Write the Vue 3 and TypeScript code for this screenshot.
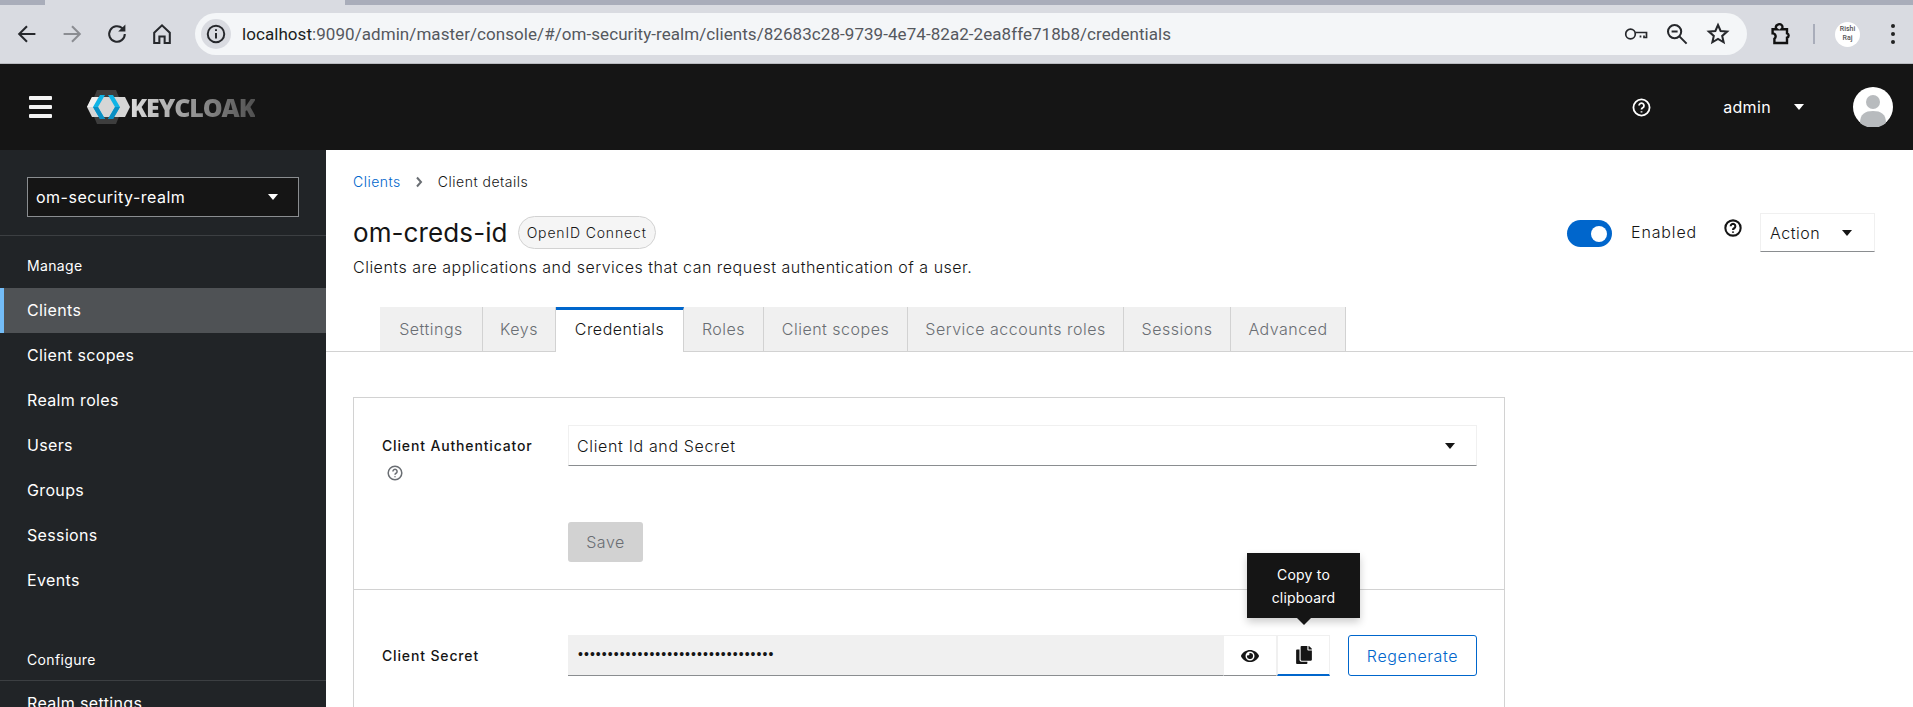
<script setup lang="ts">
const url = {
  host: 'localhost',
  rest: ':9090/admin/master/console/#/om-security-realm/clients/82683c28-9739-4e74-82a2-2ea8ffe718b8/credentials',
}

const manageItems = ['Clients', 'Client scopes', 'Realm roles', 'Users', 'Groups', 'Sessions', 'Events']
const tabs = ['Settings', 'Keys', 'Credentials', 'Roles', 'Client scopes', 'Service accounts roles', 'Sessions', 'Advanced']
const secret = '•'.repeat(33)
</script>

<template>
  <div class="page">
    <div class="tabstrip"><div class="active-tab"></div></div>

    <div class="toolbar">
      <div class="nav-icons">
        <svg class="tb-icon" viewBox="0 0 20 20"><path d="M17 10H4M10 3.500 3.500 10l6.500 6.500" /></svg>
        <svg class="tb-icon muted" viewBox="0 0 20 20"><path d="M3 10h13M10 3.500l6.500 6.500-6.500 6.500" /></svg>
        <svg class="tb-icon" viewBox="0 0 20 20"><path d="M16.500 10a6.500 6.500 0 1 1-2-4.700" /><path class="solid" d="M17 2v6h-6z" /></svg>
        <svg class="tb-icon" viewBox="0 0 20 20"><path d="M3.500 9 10 2.800 16.500 9v8.500h-4.300v-5.500H7.800v5.500H3.500z" /></svg>
      </div>

      <div class="urlbar">
        <span class="site-info">
          <svg viewBox="0 0 20 20" class="info-icon"><circle cx="10" cy="10" r="7.500" /><path d="M10 9v5M10 5.600v1.600" /></svg>
        </span>
        <span class="url"><span class="host">{{ url.host }}</span>{{ url.rest }}</span>
        <span class="url-actions">
          <svg class="tb-icon key" viewBox="0 0 24 14"><circle cx="6.500" cy="7" r="4.800" /><path d="M11.500 5.500h11v5h-2.500v-2M16.500 8.500v2" /></svg>
          <svg class="tb-icon" viewBox="0 0 20 20"><circle cx="8" cy="8" r="5.500" /><path d="M5.500 8h5M12 12l6 6" /></svg>
          <svg class="tb-icon" viewBox="0 0 20 20"><path d="m10 2.500 2.200 5 5.400.5-4.100 3.600 1.200 5.300L10 14.100l-4.700 2.800 1.200-5.300L2.400 8l5.400-.5z" /></svg>
        </span>
      </div>

      <div class="toolbar-end">
        <svg class="tb-icon puzzle" viewBox="0 0 20 20"><path d="M3 6h3.500a2 2 0 0 1 .5-3.500A2 2 0 0 1 10.500 6H15v3.500a1.800 1.800 0 0 1 0 3.500v4.500H4.500V14a2.500 2.500 0 0 0-1.500-4.500z" /></svg>
        <span class="tb-sep"></span>
        <span class="profile">Rishi<br />Raj</span>
        <span class="kebab"><i></i><i></i><i></i></span>
      </div>
    </div>

    <header class="masthead">
      <div class="hamburger"><i></i><i></i><i></i></div>
      <div class="logo">
        <svg class="logo-mark" viewBox="0 0 44 34">
          <path d="M10 0h19l7 17-7 17H10L3 17z" fill="#3d3d3d" />
          <path d="M0 17 5 7h33l5 10-5 10H5z" fill="#d6d6d6" />
          <path d="M0 17 5 7h6l-4 10z" fill="#efefef" />
          <path d="M13 5 6 17l7 12h5l-7-12 7-12z" fill="#0fb4e6" />
          <path d="M26 5h-5l7 12-7 12h5l7-12z" fill="#0fb4e6" />
          <path d="M6 17h5l7 12h-5zM28 17h5l-7 12h-5z" fill="#0a8fc4" />
        </svg>
        <span class="logo-text">KEYCLOAK</span>
      </div>
      <div class="masthead-right">
        <svg class="help white" viewBox="0 0 20 20"><circle cx="10" cy="10" r="8.500" /><path d="M7.400 8a2.600 2.600 0 1 1 3.900 2.300c-.9.500-1.300 1-1.300 1.900M10 14v1.200" /></svg>
        <span class="user">admin</span>
        <span class="caret white"></span>
        <svg class="avatar" viewBox="0 0 40 40">
          <circle cx="20" cy="20" r="20" fill="#fff" />
          <circle cx="20" cy="15" r="7" fill="#b8bbbe" />
          <path d="M7 36c0-9 5-12 13-12s13 3 13 12a20 20 0 0 1-26 0z" fill="#b8bbbe" />
        </svg>
      </div>
    </header>

    <div class="body">
      <aside class="sidebar">
        <div class="realm-wrap">
          <div class="realm"><span>om-security-realm</span><span class="caret white"></span></div>
        </div>
        <div class="nav-title">Manage</div>
        <nav>
          <a v-for="item in manageItems" :key="item" class="nav-item" :class="{ current: item === 'Clients' }">{{ item }}</a>
        </nav>
        <div class="nav-title configure">Configure</div>
        <a class="nav-item">Realm settings</a>
      </aside>

      <main class="main">
        <section class="page-head">
          <div class="crumbs">
            <a class="link">Clients</a>
            <svg class="chevron" viewBox="0 0 8 12"><path d="m2 1.500 4 4.500-4 4.500" /></svg>
            <span>Client details</span>
          </div>
          <div class="head-row">
            <div class="head-left">
              <div class="title-row">
                <h1>om-creds-id</h1>
                <span class="badge">OpenID Connect</span>
              </div>
              <p class="desc">Clients are applications and services that can request authentication of a user.</p>
            </div>
            <div class="head-right">
              <span class="switch"><i></i></span>
              <span class="enabled">Enabled</span>
              <svg class="help black" viewBox="0 0 20 20"><circle cx="10" cy="10" r="8.500" /><path d="M7.400 8a2.600 2.600 0 1 1 3.900 2.300c-.9.500-1.300 1-1.300 1.900M10 14v1.200" /></svg>
              <div class="action"><span>Action</span><span class="caret"></span></div>
            </div>
          </div>
        </section>

        <div class="tabs">
          <div v-for="tab in tabs" :key="tab" class="tab" :class="{ active: tab === 'Credentials' }">{{ tab }}</div>
        </div>

        <div class="card">
          <section class="form-row first">
            <div class="label-col">
              <label>Client Authenticator</label>
              <svg class="help gray" viewBox="0 0 20 20"><circle cx="10" cy="10" r="8.500" /><path d="M7.400 8a2.600 2.600 0 1 1 3.900 2.300c-.9.500-1.300 1-1.300 1.900M10 14v1.200" /></svg>
            </div>
            <div class="field-col">
              <div class="select"><span>Client Id and Secret</span><span class="caret"></span></div>
              <button class="save">Save</button>
            </div>
          </section>
          <section class="form-row second">
            <div class="label-col centered"><label>Client Secret</label></div>
            <div class="secret-row">
              <div class="secret">{{ secret }}</div>
              <button class="icon-btn">
                <svg viewBox="0 0 576 512"><path d="M572.520 241.400C518.290 135.590 410.930 64 288 64S57.680 135.640 3.480 241.410a32.350 32.350 0 0 0 0 29.190C57.710 376.410 165.070 448 288 448s230.320-71.640 284.520-177.410a32.350 32.350 0 0 0 0-29.190zM288 400a144 144 0 1 1 144-144 143.930 143.930 0 0 1-144 144zm0-240a95.310 95.310 0 0 0-25.310 3.790 47.850 47.850 0 0 1-66.900 66.900A95.780 95.780 0 1 0 288 160z" /></svg>
              </button>
              <button class="icon-btn copy">
                <svg viewBox="0 0 448 512"><path d="M320 448v40c0 13.255-10.745 24-24 24H24c-13.255 0-24-10.745-24-24V120c0-13.255 10.745-24 24-24h72v296c0 30.879 25.121 56 56 56h168zm0-344V0H152c-13.255 0-24 10.745-24 24v368c0 13.255 10.745 24 24 24h272c13.255 0 24-10.745 24-24V128H344c-13.200 0-24-10.800-24-24zm120.971-31.029L375.029 7.029A24 24 0 0 0 358.059 0H352v96h96v-6.059a24 24 0 0 0-7.029-16.970z" /></svg>
                <span class="tooltip">Copy to clipboard</span>
              </button>
              <button class="regen">Regenerate</button>
            </div>
          </section>
        </div>
      </main>
    </div>
  </div>
</template>

<style>
html,
body {
  margin: 0;
  overflow: hidden;
  background: #fff;
}
</style>

<style scoped>
.page {
  width: 1913px;
  height: 707px;
  overflow: hidden;
  font-family: Inter, "Liberation Sans", sans-serif;
  font-size: 16px;
  letter-spacing: 0.350px;
  color: #151515;
  display: flex;
  flex-direction: column;
}

.tabstrip {
  height: 5px;
  background: #a9adba;
  flex: none;
}
.active-tab {
  width: 300px;
  margin-left: 45px;
  height: 5px;
  background: #d9dbe1;
}

.toolbar {
  height: 59px;
  flex: none;
  box-sizing: border-box;
  padding: 8px 0 8px 15px;
  background: #d9dbe1;
  border-bottom: 1px solid #b9bbc0;
  display: flex;
  align-items: flex-start;
}
.nav-icons {
  display: flex;
  gap: 21px;
  margin-top: 9px;
}
.tb-icon {
  width: 24px;
  height: 24px;
  fill: none;
  stroke: #26282c;
  stroke-width: 1.700;
}
.tb-icon.muted {
  stroke: #8b8d92;
}
.tb-icon .solid {
  fill: #26282c;
  stroke: none;
}
.urlbar {
  margin-left: 21px;
  width: 1552px;
  height: 42px;
  border-radius: 21px;
  background: #f4f6f8;
  display: flex;
  align-items: center;
  padding-left: 6px;
  box-sizing: border-box;
}
.site-info {
  width: 30px;
  height: 30px;
  border-radius: 50%;
  background: #d9dbe1;
  display: flex;
  align-items: center;
  justify-content: center;
}
.info-icon {
  width: 22px;
  height: 22px;
  fill: none;
  stroke: #26282c;
  stroke-width: 1.800;
}
.url {
  margin-left: 11px;
  font-family: Roboto, sans-serif;
  font-size: 17px;
  letter-spacing: 0.060px;
  color: #55585e;
  white-space: nowrap;
}
.host {
  color: #1c1e21;
}
.url-actions {
  margin-left: auto;
  margin-right: 17px;
  display: flex;
  align-items: center;
  gap: 17px;
}
.key {
  height: 14px;
}
.toolbar-end {
  display: flex;
  align-items: center;
  height: 42px;
  margin-left: 22px;
}
.puzzle {
  stroke-width: 2;
  stroke: #111;
}
.tb-sep {
  width: 2px;
  height: 20px;
  margin-left: 20px;
  background: #a9adba;
}
.profile {
  margin-left: 20px;
  width: 25px;
  height: 25px;
  border-radius: 50%;
  background: #fff;
  font-family: Roboto, sans-serif;
  font-size: 7px;
  font-weight: 500;
  letter-spacing: 0;
  line-height: 9px;
  text-align: center;
  display: flex;
  align-items: center;
  color: #555;
  justify-content: center;
}
.kebab {
  margin-left: 31px;
  display: flex;
  flex-direction: column;
  gap: 4px;
}
.kebab i {
  width: 4px;
  height: 4px;
  border-radius: 50%;
  background: #222;
}

.masthead {
  height: 86px;
  background: #151515;
  display: flex;
  align-items: center;
  color: #fff;
  flex: none;
}
.hamburger {
  margin-left: 29px;
  display: flex;
  flex-direction: column;
  gap: 5px;
}
.hamburger i {
  width: 23px;
  height: 4px;
  border-radius: 1px;
  background: #f4f4f4;
}
.logo {
  margin-left: 35px;
  display: flex;
  align-items: center;
}
.logo-mark {
  width: 44px;
  height: 34px;
}
.logo-text {
  font-family: "Open Sans", sans-serif;
  font-weight: 800;
  font-size: 25px;
  letter-spacing: -1.100px;
  line-height: 1;
  margin-left: -1px;
  background: linear-gradient(90deg, #dcdcdc, #505050 100%);
  -webkit-background-clip: text;
  background-clip: text;
  color: transparent;
}
.masthead-right {
  margin-left: auto;
  margin-right: 20px;
  display: flex;
  align-items: center;
}
.help {
  fill: none;
  stroke-width: 1.900;
}
.help.white {
  width: 19px;
  height: 19px;
  stroke: #fff;
}
.user {
  margin-left: 72px;
  font-size: 16px;
  color: #fff;
}
.caret {
  display: inline-block;
  width: 0;
  height: 0;
  border-left: 5px solid transparent;
  border-right: 5px solid transparent;
  border-top: 6px solid #151515;
}
.caret.white {
  border-top-color: #fff;
}
.masthead-right .caret {
  margin-left: 23px;
}
.avatar {
  margin-left: 49px;
  width: 40px;
  height: 40px;
}

.body {
  flex: 1;
  display: flex;
  min-height: 0;
}
.sidebar {
  width: 326px;
  flex: none;
  background: #212427;
  color: #fff;
}
.realm-wrap {
  padding: 27px 27px 18px;
  border-bottom: 1px solid #3c3f42;
}
.realm {
  height: 40px;
  box-sizing: border-box;
  background: #151515;
  border: 1px solid #8a8d90;
  display: flex;
  align-items: center;
  justify-content: space-between;
  padding: 0 20px 0 8px;
  letter-spacing: 0.500px;
}
.nav-title {
  font-size: 14px;
  padding-left: 27px;
  height: 52px;
  line-height: 59px;
  box-sizing: border-box;
}
.nav-item {
  display: block;
  height: 45px;
  line-height: 45px;
  padding-left: 27px;
}
.nav-item.current {
  background: #4f5255;
  border-left: 4px solid #73bcf7;
  padding-left: 23px;
}
.nav-title.configure {
  margin-top: 33px;
  height: 45px;
  line-height: 48px;
  border-bottom: 1px solid #3c3f42;
}

.main {
  flex: 1;
  min-width: 0;
  font-weight: 350;
  letter-spacing: 0.500px;
}
.page-head {
  height: 157px;
  box-sizing: border-box;
  padding: 21px 38px 0 27px;
}
.crumbs {
  height: 21px;
  display: flex;
  align-items: center;
  font-size: 14px;
}
.link {
  color: #06c;
}
.chevron {
  width: 8px;
  height: 12px;
  margin: 0 15px 0 14px;
  fill: none;
  stroke: #6a6e73;
  stroke-width: 2;
}
.head-row {
  display: flex;
  justify-content: space-between;
  margin-top: 21px;
}
.title-row {
  margin-top: 3px;
  height: 33px;
  display: flex;
  align-items: center;
}
h1 {
  margin: 0;
  font-size: 26px;
  font-weight: 400;
  letter-spacing: 0.100px;
  line-height: 33px;
}
.badge {
  margin-left: 10px;
  height: 33px;
  box-sizing: border-box;
  border: 1px solid #d2d2d2;
  border-radius: 17px;
  background: #f5f5f5;
  padding: 0 8px;
  font-size: 14px;
  letter-spacing: 0.850px;
  line-height: 31px;
  white-space: nowrap;
}
.desc {
  margin: 8px 0 0;
  line-height: 20px;
}
.head-right {
  display: flex;
  align-items: flex-start;
}
.switch {
  margin-top: 7px;
  width: 45px;
  height: 27px;
  border-radius: 14px;
  background: #06c;
  position: relative;
}
.switch i {
  position: absolute;
  right: 5px;
  top: 6px;
  width: 16px;
  height: 16px;
  border-radius: 50%;
  background: #fff;
}
.enabled {
  margin-left: 19px;
  margin-top: 9px;
  letter-spacing: 0.850px;
}
.help.black {
  margin: 6px 18px 0 27px;
  width: 18px;
  height: 18px;
  stroke: #151515;
  stroke-width: 2.300;
}
.action {
  width: 115px;
  height: 39px;
  box-sizing: border-box;
  border: 1px solid #f0f0f0;
  border-bottom-color: #8a8d90;
  display: flex;
  align-items: center;
  justify-content: space-between;
  padding: 0 22px 0 9px;
}

.tabs {
  height: 45px;
  box-sizing: border-box;
  padding-left: 54px;
  border-bottom: 1px solid #d2d2d2;
  display: grid;
  grid-template-columns: 103px 73px 128px 80px 144px 216px 107px 115px;
  justify-content: start;
}
.tab {
  height: 44px;
  box-sizing: border-box;
  line-height: 44px;
  text-align: center;
  background: #f0f0f0;
  color: #6a6e73;
  border-right: 1px solid #d2d2d2;
  white-space: nowrap;
}
.tab.active {
  background: #fff;
  color: #151515;
  border-top: 3px solid #06c;
  border-right: 1px solid #d2d2d2;
  height: 45px;
  line-height: 38px;
}

.card {
  margin: 45px 0 0 27px;
  width: 1152px;
  height: 400px;
  box-sizing: border-box;
  border: 1px solid #d2d2d2;
}
.form-row {
  display: flex;
  padding: 0 27px 0 28px;
}
.form-row.first {
  padding-top: 27px;
  padding-bottom: 27px;
  border-bottom: 1px solid #d2d2d2;
}
.form-row.second {
  padding-top: 45px;
}
.label-col {
  width: 186px;
  flex: none;
  padding-top: 11px;
}
.label-col.centered {
  padding-top: 11px;
}
label {
  display: block;
  font-size: 14px;
  font-weight: 500;
  letter-spacing: 0.850px;
  line-height: 20px;
  white-space: nowrap;
}
.help.gray {
  display: block;
  margin: 9px 0 0 5px;
  width: 16px;
  height: 16px;
  stroke: #6a6e73;
}
.field-col {
  flex: 1;
}
.select {
  height: 41px;
  box-sizing: border-box;
  border: 1px solid #f0f0f0;
  border-bottom-color: #8a8d90;
  display: flex;
  align-items: center;
  justify-content: space-between;
  padding: 0 21px 0 8px;
  letter-spacing: 0.650px;
}
.save {
  display: block;
  margin-top: 56px;
  width: 75px;
  height: 40px;
  border: 0;
  border-radius: 3px;
  background: #d2d2d2;
  color: #6a6e73;
  font: inherit;
  letter-spacing: inherit;
}
.secret-row {
  flex: 1;
  display: flex;
  height: 41px;
}
.secret {
  width: 655px;
  box-sizing: border-box;
  background: #f0f0f0;
  border-bottom: 1px solid #8a8d90;
  padding-left: 10px;
  line-height: 38px;
  font-family: "Liberation Sans", sans-serif;
  font-size: 14px;
  letter-spacing: 1.050px;
  overflow: hidden;
}
.icon-btn {
  width: 54px;
  height: 41px;
  box-sizing: border-box;
  background: #fff;
  border: 1px solid #f0f0f0;
  border-bottom-color: #8a8d90;
  padding: 0;
  position: relative;
}
.icon-btn svg {
  display: block;
  margin: 0 auto;
  width: 18px;
  height: 18px;
  fill: #151515;
}
.icon-btn.copy {
  width: 53px;
  border-bottom: 2px solid #06c;
}
.tooltip {
  position: absolute;
  left: -31px;
  bottom: 56px;
  width: 113px;
  height: 65px;
  box-sizing: border-box;
  padding: 10px 12px 0;
  background: #151515;
  color: #fff;
  font: 14px/23px Inter, sans-serif;
  letter-spacing: 0.200px;
  text-align: center;
  box-shadow: 0 4px 8px rgba(3, 3, 3, 0.200);
}
.tooltip::after {
  content: "";
  position: absolute;
  left: 50%;
  bottom: -7px;
  margin-left: -7px;
  border-left: 7px solid transparent;
  border-right: 7px solid transparent;
  border-top: 7px solid #151515;
}
.regen {
  margin-left: 18px;
  width: 129px;
  height: 41px;
  box-sizing: border-box;
  border: 1px solid #06c;
  border-radius: 3px;
  background: #fff;
  color: #06c;
  font: inherit;
  letter-spacing: 0.600px;
}
</style>
